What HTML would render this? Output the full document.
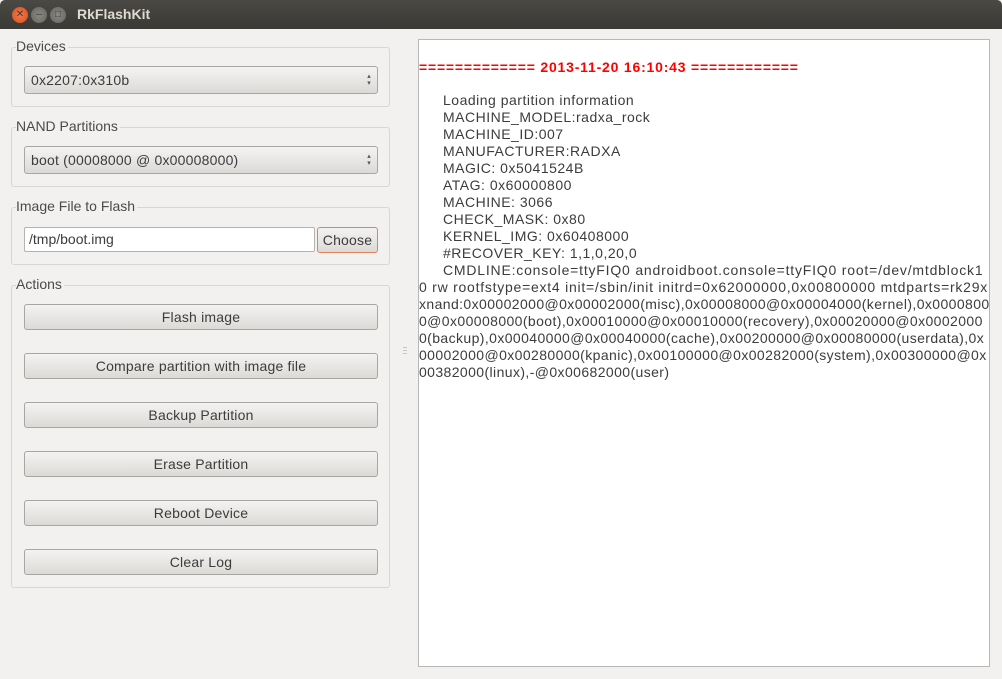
<!DOCTYPE html>
<html><head><meta charset="utf-8"><style>
*{box-sizing:border-box;margin:0;padding:0}
body{width:1002px;height:679px;overflow:hidden;background:#f2f1f0;font-family:"Liberation Sans","DejaVu Sans",sans-serif;color:#3c3c3c;position:relative}
.tb{position:absolute;left:0;top:0;width:1002px;height:29px;background:linear-gradient(#4a4944,#3a3935);border-radius:5px 5px 0 0}
.tb .t{position:absolute;left:77px;top:6px;color:#dfdbd2;font-weight:bold;font-size:14px}
.btn{position:absolute;top:7px;width:16px;height:16px;border-radius:50%;font-size:10px;text-align:center;line-height:16px;color:#3a3a3a}
.abs{position:absolute}
.grp{position:absolute;left:11px;width:379px;border:1px solid #d8d6d3;border-radius:3px}
.lbl{position:absolute;left:16px;font-size:14px;color:#4a4a4a;background:#f2f1f0;padding-right:2px}
.pb{position:absolute;left:24px;width:354px;height:26px;border:1px solid #a8a6a2;border-radius:3px;background:linear-gradient(#f4f3f2,#dcdad7);font-size:14px;text-align:center;line-height:24px;color:#3c3c3c;letter-spacing:0.2px}
.cb{text-align:left;padding-left:6px;height:28px;line-height:26px}
.arr{position:absolute;right:6px;top:6px;font-size:7px;line-height:7px;color:#555}
.log{position:absolute;left:418px;top:39px;width:572px;height:628px;background:#fff;border:1px solid #b9b7b4;font-size:14px;color:#3c3c3c;overflow:hidden}
.l{position:absolute;white-space:nowrap;line-height:17px}
</style></head><body>
<div class="tb">
<div class="btn" style="left:12px;background:radial-gradient(#f47a4a,#d94e1c)">✕</div>
<div class="btn" style="left:31px;background:radial-gradient(#8a8984,#65645f)">–</div>
<div class="btn" style="left:50px;background:radial-gradient(#8a8984,#65645f)">□</div>
<div class="t">RkFlashKit</div>
</div>

<div class="grp" style="top:47px;height:60px"></div>
<div class="lbl" style="top:38px">Devices</div>
<div class="pb cb" style="top:66px">0x2207:0x310b<div class="arr">▴<br>▾</div></div>

<div class="grp" style="top:127px;height:60px"></div>
<div class="lbl" style="top:118px">NAND Partitions</div>
<div class="pb cb" style="top:146px">boot (00008000 @ 0x00008000)<div class="arr">▴<br>▾</div></div>

<div class="grp" style="top:207px;height:58px"></div>
<div class="lbl" style="top:198px">Image File to Flash</div>
<div class="abs" style="left:24px;top:227px;width:291px;height:25px;background:#fff;border:1px solid #b5b3b0;border-radius:2px;font-size:14px;line-height:23px;padding-left:4px;color:#3c3c3c">/tmp/boot.img</div>
<div class="pb" style="left:317px;top:227px;width:61px;height:26px;border-color:#e2815c;font-size:14px">Choose</div>

<div class="grp" style="top:285px;height:303px"></div>
<div class="lbl" style="top:276px">Actions</div>
<div class="pb" style="top:304px">Flash image</div>
<div class="pb" style="top:353px">Compare partition with image file</div>
<div class="pb" style="top:402px">Backup Partition</div>
<div class="pb" style="top:451px">Erase Partition</div>
<div class="pb" style="top:500px">Reboot Device</div>
<div class="pb" style="top:549px">Clear Log</div>

<div class="abs" style="left:403px;top:347px;width:4px;height:7px;border-top:1px solid #c8c6c3;border-bottom:1px solid #c8c6c3"></div>
<div class="abs" style="left:403px;top:350px;width:4px;height:1px;background:#c8c6c3"></div>

<div class="log">
<div class="l" style="left:0;top:19px;color:#f00;font-weight:bold;font-size:14px;letter-spacing:0.8px">============= 2013-11-20 16:10:43 ============</div>
<div class="l" style="left:24px;top:52px;letter-spacing:0.5px">Loading partition information<br>MACHINE_MODEL:radxa_rock<br>MACHINE_ID:007<br>MANUFACTURER:RADXA<br>MAGIC: 0x5041524B<br>ATAG: 0x60000800<br>MACHINE: 3066<br>CHECK_MASK: 0x80<br>KERNEL_IMG: 0x60408000<br>#RECOVER_KEY: 1,1,0,20,0<br><span style="letter-spacing:0.8px">CMDLINE:console=ttyFIQ0 androidboot.console=ttyFIQ0 root=/dev/mtdblock1</span></div>
<div class="l" style="left:0;top:239px;font-size:14px;letter-spacing:0.4px"><span style="letter-spacing:0.75px">0 rw rootfstype=ext4 init=/sbin/init initrd=0x62000000,0x00800000 mtdparts=rk29x</span><br>xnand:0x00002000@0x00002000(misc),0x00008000@0x00004000(kernel),0x0000800<br>0@0x00008000(boot),0x00010000@0x00010000(recovery),0x00020000@0x0002000<br>0(backup),0x00040000@0x00040000(cache),0x00200000@0x00080000(userdata),0x<br>00002000@0x00280000(kpanic),0x00100000@0x00282000(system),0x00300000@0x<br>00382000(linux),-@0x00682000(user)</div>
</div>
</body></html>
